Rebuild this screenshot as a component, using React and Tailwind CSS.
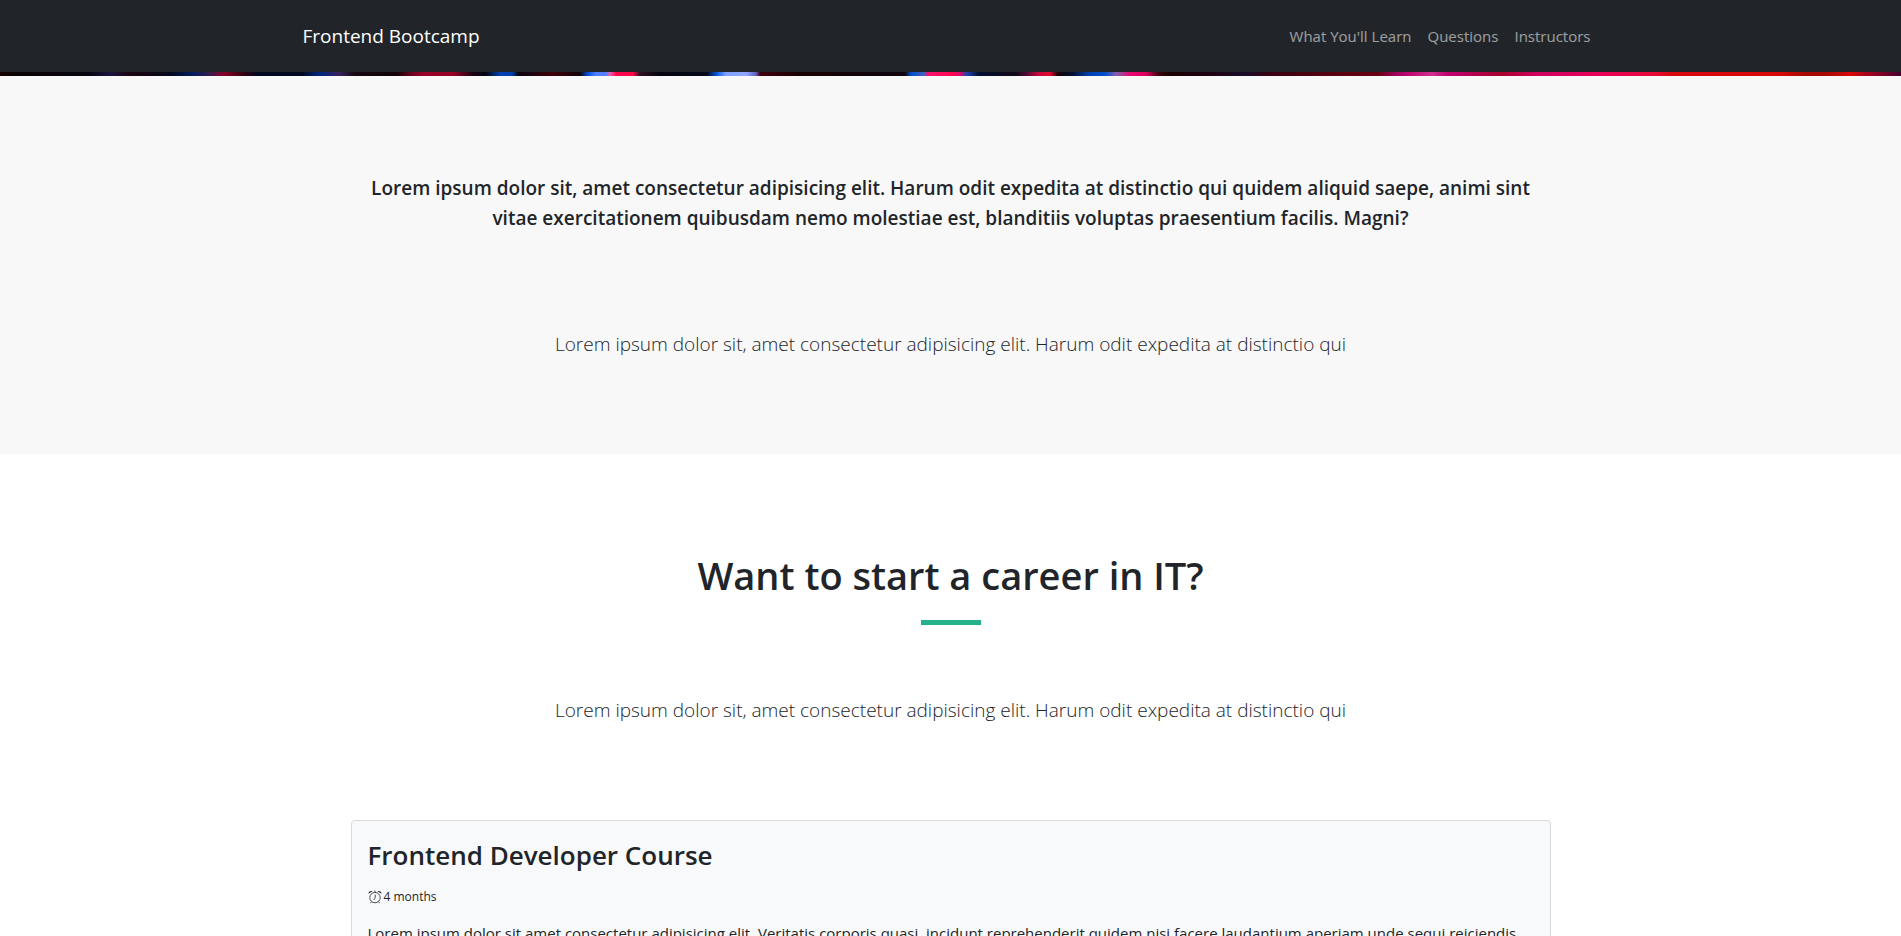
const glow = [
  [0, "#180000"], [16, "#080404"], [90, "#080410"], [110, "#1c1440"], [130, "#1c0410"], [171, "#04081c"],
  [192, "#001c60"], [208, "#301c50"], [224, "#880028"], [245, "#300010"], [257, "#000820"], [302, "#000820"],
  [320, "#002880"], [339, "#382060"], [355, "#180810"], [396, "#100008"], [412, "#700020"], [424, "#980028"],
  [453, "#980028"], [473, "#180010"], [486, "#040410"], [500, "#0040b0"], [512, "#0040b0"], [518, "#080410"],
  [553, "#400008"], [580, "#100008"], [588, "#0050d8"], [596, "#5080ff"], [606, "#5080ff"], [610, "#f060b0"],
  [616, "#ff0850"], [633, "#ff0848"], [640, "#301020"], [660, "#040410"], [707, "#040818"], [716, "#0050d8"],
  [726, "#80a0ff"], [746, "#90a8ff"], [756, "#6060c0"], [760, "#400010"], [803, "#180000"], [905, "#100410"],
  [911, "#0050c8"], [924, "#4060c0"], [928, "#f81070"], [950, "#ff0850"], [960, "#e00860"], [967, "#2040b0"],
  [979, "#001030"], [1016, "#100818"], [1028, "#600838"], [1040, "#d00838"], [1050, "#e00830"], [1058, "#180008"],
  [1073, "#001030"], [1089, "#0040b0"], [1105, "#0050d0"], [1116, "#8060b0"], [1130, "#e80870"], [1146, "#e00060"],
  [1158, "#400010"], [1171, "#180000"], [1207, "#200010"], [1244, "#180c28"], [1270, "#380010"], [1330, "#580010"],
  [1378, "#680010"], [1397, "#a00060"], [1410, "#c00870"], [1432, "#d03090"], [1448, "#c00070"], [1500, "#a80030"],
  [1540, "#d00060"], [1600, "#e80058"], [1655, "#e80838"], [1670, "#d80810"], [1780, "#d80808"], [1805, "#a80800"],
  [1825, "#a80800"], [1850, "#d80808"], [1870, "#a00020"], [1901, "#400030"],
];

function GlowStrip() {
  return (
    <svg className="block h-1 w-full" viewBox="0 0 1901 4" preserveAspectRatio="none" aria-hidden="true">
      <defs>
        <linearGradient id="glow">
          {glow.map(([x, color]) => (
            <stop key={x} offset={x / 1901} stopColor={color} />
          ))}
        </linearGradient>
      </defs>
      <rect width="1901" height="4" fill="url(#glow)" />
    </svg>
  );
}

function AlarmClock() {
  return (
    <svg className="size-[14px]" viewBox="0 0 14 14" fill="none" stroke="#212529" strokeWidth="0.8" aria-hidden="true">
      <circle cx="7" cy="7.6" r="5.2" />
      <path d="M7.2 4.6v3.2L5.8 10M3.4 11.8l-1 1.4M10.6 11.8l1 1.4M6.2 1.2h1.6" />
      <path d="M.4 3.8C.4 1.8 2.4.4 4.6 1.2zM13.6 3.8C13.6 1.8 11.6.4 9.4 1.2z" fill="#212529" stroke="none" />
    </svg>
  );
}

const links = ["What You'll Learn", "Questions", "Instructors"];

function Lead() {
  return (
    <p className="text-center text-[19px] leading-[30px] font-light">
      Lorem ipsum dolor sit, amet consectetur adipisicing elit. Harum odit expedita at distinctio qui
    </p>
  );
}

export default function App() {
  return (
    <div className="h-screen overflow-hidden bg-white font-['Open_Sans','Noto_Sans',sans-serif] text-[#212529]">
      <header className="bg-[#212529]">
        <nav className="mx-auto flex h-[72px] max-w-[1320px] items-center justify-between px-3">
          <a href="#" className="text-[19px] leading-[30px] text-white">Frontend Bootcamp</a>
          <ul className="flex">
            {links.map((label) => (
              <li key={label}>
                <a href="#" className="px-2 text-[15px] leading-6 text-white/55">{label}</a>
              </li>
            ))}
          </ul>
        </nav>
      </header>
      <GlowStrip />

      <section className="bg-[#f8f8f8] px-3 pt-[97px] pb-[95px]">
        <div className="mx-auto flex max-w-[1200px] flex-col gap-24">
          <p className="text-center text-[19px] leading-[30px] font-semibold">
            Lorem ipsum dolor sit, amet consectetur adipisicing elit. Harum odit expedita at distinctio qui quidem
            aliquid saepe, animi sint vitae exercitationem quibusdam nemo molestiae est, blanditiis voluptas
            praesentium facilis. Magni?
          </p>
          <Lead />
        </div>
      </section>

      <section className="px-3 pt-[97px]">
        <div className="mx-auto max-w-[1200px]">
          <h1 className="text-center text-[38px] leading-[48px] font-semibold">Want to start a career in IT?</h1>
          <div className="mx-auto mt-[21px] h-[5px] w-[60px] bg-[#24b28a]" />
          <div className="pt-[70px] pb-[95px]">
            <Lead />
          </div>
          <article className="rounded border border-[#d8dadc] bg-[#f8f9fb] p-4">
            <h3 className="text-[26px] leading-9 font-semibold">Frontend Developer Course</h3>
            <p className="mt-3 flex items-center gap-0.5 text-[12px] leading-6">
              <AlarmClock />
              4 months
            </p>
            <p className="mt-3 text-[15px] leading-6">
              Lorem ipsum dolor sit amet consectetur adipisicing elit. Veritatis corporis quasi, incidunt
              reprehenderit quidem nisi facere laudantium aperiam unde sequi reiciendis
            </p>
          </article>
        </div>
      </section>
    </div>
  );
}
